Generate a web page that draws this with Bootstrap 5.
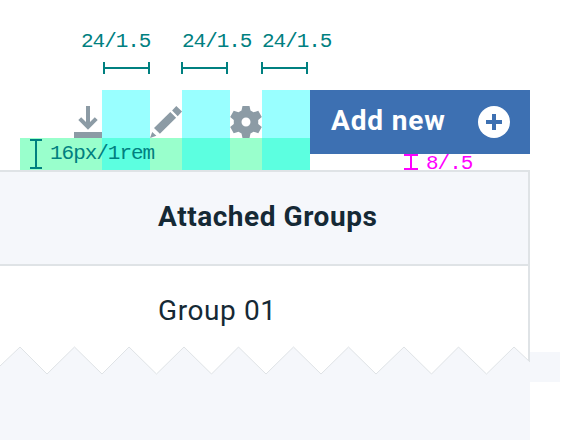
<!DOCTYPE html>
<html lang="en">
<head>
<meta charset="utf-8">
<meta name="viewport" content="width=device-width, initial-scale=1">
<title>Attached Groups</title>
<link href="https://cdn.jsdelivr.net/npm/bootstrap@5.3.0/dist/css/bootstrap.min.css" rel="stylesheet">
<style>
body{width:580px;height:440px;font-family:Roboto,"Open Sans",sans-serif;color:#152935}
.toolbar{height:170px;width:530px;padding-top:90px}
.toolbar svg{display:block;fill:#8c9ba5}
.slot{height:48px;width:32px}
.slot-wide{width:102px}
.gutter{width:48px}
.btn-add{--bs-btn-color:#fff;--bs-btn-bg:#3d70b2;--bs-btn-border-width:0;--bs-btn-border-radius:0;width:220px;height:64px;padding:0 20px 0 21px;font-weight:700;font-size:28px;line-height:60px}
.btn-add .lbl{letter-spacing:.85px;margin-top:-2px}
.panel{width:530px;border-top:2px solid #dfe3e6;border-right:2px solid #dfe3e6;height:192px}
.panel-head{height:94px;background:#f5f7fb;border-bottom:2px solid #dfe3e6;letter-spacing:.55px}
.panel-row{height:96px;letter-spacing:.6px}
.panel-head,.panel-row{padding-left:158px;font-size:28px;line-height:89px;white-space:nowrap}
.note{font-family:"Liberation Mono",monospace;font-size:21px;letter-spacing:-1.03px;line-height:24px;color:#008080;white-space:nowrap;position:absolute}
.pink{color:#f0f}
.over{position:absolute;pointer-events:none}
.band-h{left:20px;top:138px;width:290px;height:32px;background:rgba(0,255,128,.4)}
.band-v{top:90px;width:48px;height:80px;background:rgba(0,255,255,.4)}
.v1{left:102px}.v2{left:182px}.v3{left:262px}
.n1{left:81px;top:30px}.n2{left:182px;top:30px}.n3{left:262px;top:30px}
.n4{left:50px;top:142px}.n5{left:426px;top:152px}
.torn{left:0;top:340px}
</style>
</head>
<body class="position-relative overflow-hidden bg-white m-0">
<header class="toolbar d-flex align-items-start">
  <div class="slot slot-wide d-flex align-items-end justify-content-end">
    <svg width="28" height="32" viewBox="0 0 28 32"><path d="M12 0h4v16l4.800-4.800 2.900 2.800L14 23.700 4.300 14l2.900-2.800L12 16zM0 26h28v6H0z"/></svg>
  </div>
  <div class="gutter"></div>
  <div class="slot d-flex align-items-end">
    <svg width="32" height="32" viewBox="0 0 32 32"><path d="M26.300 0l5.700 5.600-4.300 4.600-5.600-5.700zM20.300 6l5.800 5.800L9.900 27.800l-5.900-5.900zM2.200 26l4.200 3.800L0 32z"/></svg>
  </div>
  <div class="gutter"></div>
  <div class="slot d-flex align-items-end">
    <svg width="32" height="32" viewBox="0 0 32 32"><path fill-rule="evenodd" d="M12.500 0h7l1 4.600 3 1.700 4.800-1.500 3.500 6.100-3.600 3.200v3.800l3.600 3.200-3.500 6.100-4.800-1.500-3 1.700-1 4.600h-7l-1-4.600-3-1.700-4.800 1.500L.2 21.100l3.600-3.200v-3.800L.2 10.900l3.500-6.100 4.800 1.500 3-1.700zM16 11.500a4.500 4.500 0 1 0 0 9 4.500 4.500 0 0 0 0-9z"/></svg>
  </div>
  <div class="gutter"></div>
  <button type="button" class="btn btn-add d-flex align-items-center justify-content-between">
    <span class="lbl">Add new</span>
    <svg width="32" height="32" viewBox="0 0 32 32"><circle cx="16" cy="16" r="16" fill="#fff"/><path d="M14 8h4v6h6v4h-6v6h-4v-6H8v-4h6z" fill="#3d70b2"/></svg>
  </button>
</header>
<main class="panel">
  <div class="panel-head fw-bold">Attached Groups</div>
  <div class="panel-row">Group 01</div>
</main>
<svg class="over torn" width="580" height="100" viewBox="0 0 580 100">
  <path d="M530 12h30v30h-30z" fill="#f5f7fb"/>
  <path d="M0 26L20 7 47 34 74.500 7 102 34 129 7 156.500 34 184 7 211.500 34 238.500 7 266 34 293.500 7 321 34 348.500 7 376 34 404 7 431.500 34 458.500 7 486.500 34 514 7 530 22V100H0z" fill="#f5f7fb"/>
  <path d="M0 26L20 7 47 34 74.500 7 102 34 129 7 156.500 34 184 7 211.500 34 238.500 7 266 34 293.500 7 321 34 348.500 7 376 34 404 7 431.500 34 458.500 7 486.500 34 514 7 530 22" fill="none" stroke="#dfe3e6"/>
</svg>
<div class="over band-h"></div>
<div class="over band-v v1"></div><div class="over band-v v2"></div><div class="over band-v v3"></div>
<span class="note n1">24/1.5</span><span class="note n2">24/1.5</span><span class="note n3">24/1.5</span>
<span class="note n4">16px/1rem</span>
<span class="note n5 pink">8/.5</span>
<svg class="over top-0 start-0" width="580" height="180" viewBox="0 0 580 180" fill="none" stroke="#008080" stroke-width="2">
  <path d="M104 62v12M149 62v12M104 68h45M182 62v12M227 62v12M182 68h45M262 62v12M307 62v12M262 68h45M30 140h12M30 168h12M36 140v28"/>
  <path stroke="#f0f" d="M404 155h14M404 169h14M411 155v14"/>
</svg>
<script src="https://cdn.jsdelivr.net/npm/bootstrap@5.3.0/dist/js/bootstrap.bundle.min.js"></script>
</body>
</html>
